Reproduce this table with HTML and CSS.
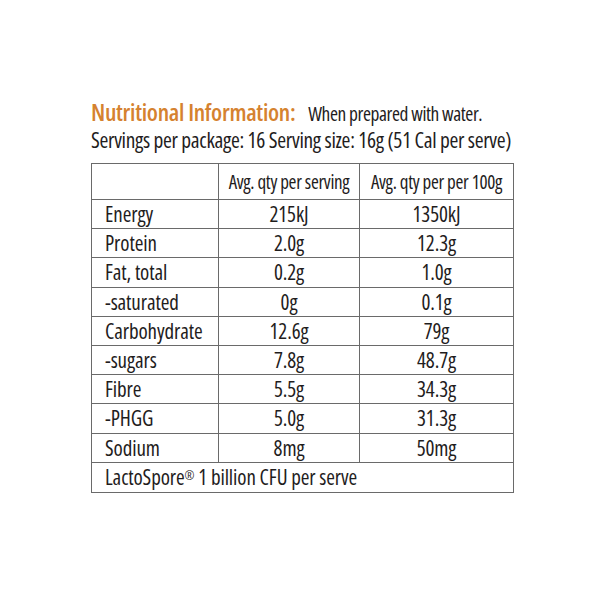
FILE: index.html
```html
<!DOCTYPE html>
<html>
<head>
<meta charset="utf-8">
<link rel="stylesheet" href="styles.css">
</head>
<body>
<div class="panel">
  <p class="intro first"><span class="heading">Nutritional Information:</span> <span class="note">When prepared with water.</span></p>
  <p class="intro">Servings per package: 16 Serving size: 16g (51 Cal per serve)</p>
  <table class="facts">
    <tr class="head">
      <td class="label"></td>
      <td>Avg. qty per serving</td>
      <td>Avg. qty per per 100g</td>
    </tr>
    <tr><td class="label">Energy</td><td>215kJ</td><td>1350kJ</td></tr>
    <tr><td class="label">Protein</td><td>2.0g</td><td>12.3g</td></tr>
    <tr><td class="label">Fat, total</td><td>0.2g</td><td>1.0g</td></tr>
    <tr><td class="label">-saturated</td><td>0g</td><td>0.1g</td></tr>
    <tr><td class="label">Carbohydrate</td><td>12.6g</td><td>79g</td></tr>
    <tr><td class="label">-sugars</td><td>7.8g</td><td>48.7g</td></tr>
    <tr><td class="label">Fibre</td><td>5.5g</td><td>34.3g</td></tr>
    <tr><td class="label">-PHGG</td><td>5.0g</td><td>31.3g</td></tr>
    <tr><td class="label">Sodium</td><td>8mg</td><td>50mg</td></tr>
    <tr class="foot"><td class="label" colspan="3">LactoSpore<sup class="reg">®</sup> 1 billion CFU per serve</td></tr>
  </table>
</div>
</body>
</html>
```
FILE: styles.css
```css
html, body {
  margin: 0;
  padding: 0;
  background: #ffffff;
}
body {
  font-family: "Open Sans", "DejaVu Sans Condensed", sans-serif;
  font-stretch: 75%;
  color: #1f1d1d;
}
.panel {
  width: 423px;
  margin-left: 91px;
  padding-top: 99px;
}
.intro {
  margin: 0;
  font-size: 21.4px;
  line-height: 27px;
  height: 27px;
  letter-spacing: -0.3px;
  white-space: nowrap;
}
.heading {
  color: #d5822f;
  font-weight: 600;
  font-size: 24px;
  line-height: 20px;
  letter-spacing: -0.3px;
  margin-right: 9px;
}
.note {
  font-size: 19.4px;
  line-height: 20px;
  letter-spacing: -0.4px;
}
.facts {
  margin-top: 10px;
  width: 423px;
  border-collapse: collapse;
  table-layout: fixed;
  font-size: 21px;
  letter-spacing: -0.1px;
}
.facts td {
  border: 1px solid #6a6a6a;
  padding: 0;
  height: 28.2px;
  text-align: center;
  white-space: nowrap;
}
.facts td:nth-child(1) { width: 113px; }
.facts td:nth-child(2) { width: 140px; }
.facts .head td {
  height: 35px;
  font-size: 19px;
  letter-spacing: -0.3px;
}
.facts td.label {
  text-align: left;
  padding-left: 13px;
}
.facts .foot td { height: 29px; }
.reg {
  font-size: 12px;
  vertical-align: 5px;
  line-height: 0;
}
```
